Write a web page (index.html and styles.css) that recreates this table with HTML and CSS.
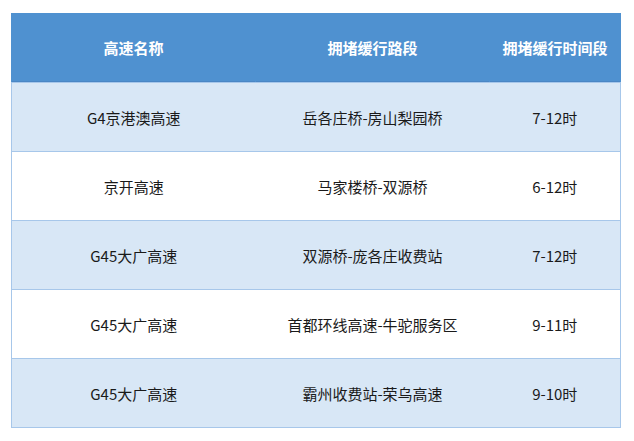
FILE: index.html
```html
<!DOCTYPE html>
<html lang="zh-CN">
<head>
<meta charset="utf-8">
<link rel="stylesheet" href="styles.css">
</head>
<body>
<table class="jam">
  <colgroup>
    <col class="c1"><col class="c2"><col class="c3">
  </colgroup>
  <thead>
    <tr><th>高速名称</th><th>拥堵缓行路段</th><th>拥堵缓行时间段</th></tr>
  </thead>
  <tbody>
    <tr class="alt"><td>G4京港澳高速</td><td>岳各庄桥-房山梨园桥</td><td>7-12时</td></tr>
    <tr><td>京开高速</td><td>马家楼桥-双源桥</td><td>6-12时</td></tr>
    <tr class="alt"><td>G45大广高速</td><td>双源桥-庞各庄收费站</td><td>7-12时</td></tr>
    <tr><td>G45大广高速</td><td>首都环线高速-牛驼服务区</td><td>9-11时</td></tr>
    <tr class="alt"><td>G45大广高速</td><td>霸州收费站-荣乌高速</td><td>9-10时</td></tr>
  </tbody>
</table>
</body>
</html>
```
FILE: styles.css
```css
html, body {
  margin: 0;
  padding: 0;
  background: #fff;
}
body {
  padding: 13px 0 0 11px;
  font-family: "Noto Sans CJK SC", "Noto Sans", sans-serif;
  font-size: 15px;
  color: #1a1a1a;
}
.jam {
  border-collapse: collapse;
  table-layout: fixed;
  width: 609px;
}
.c1 { width: 244px; }
.c2 { width: 234px; }
.c3 { width: 131px; }
.jam th {
  background: #4f91d0;
  color: #fff;
  font-weight: bold;
  height: 69px;
  padding: 0;
  text-align: center;
  border-bottom: 1px solid #a7c7ea;
  border-left: 1px solid #4f91d0;
  border-right: 1px solid #4f91d0;
  box-shadow: inset 0 -1px 0 #4a86c4;
}
.jam td {
  height: 68px;
  padding: 0;
  text-align: center;
  border-bottom: 1px solid #a7c7ea;
}
.jam td:first-child { border-left: 1px solid #a7c7ea; }
.jam td:last-child { border-right: 1px solid #a7c7ea; }
.jam tr.alt td { background: #d8e7f6; }
```
